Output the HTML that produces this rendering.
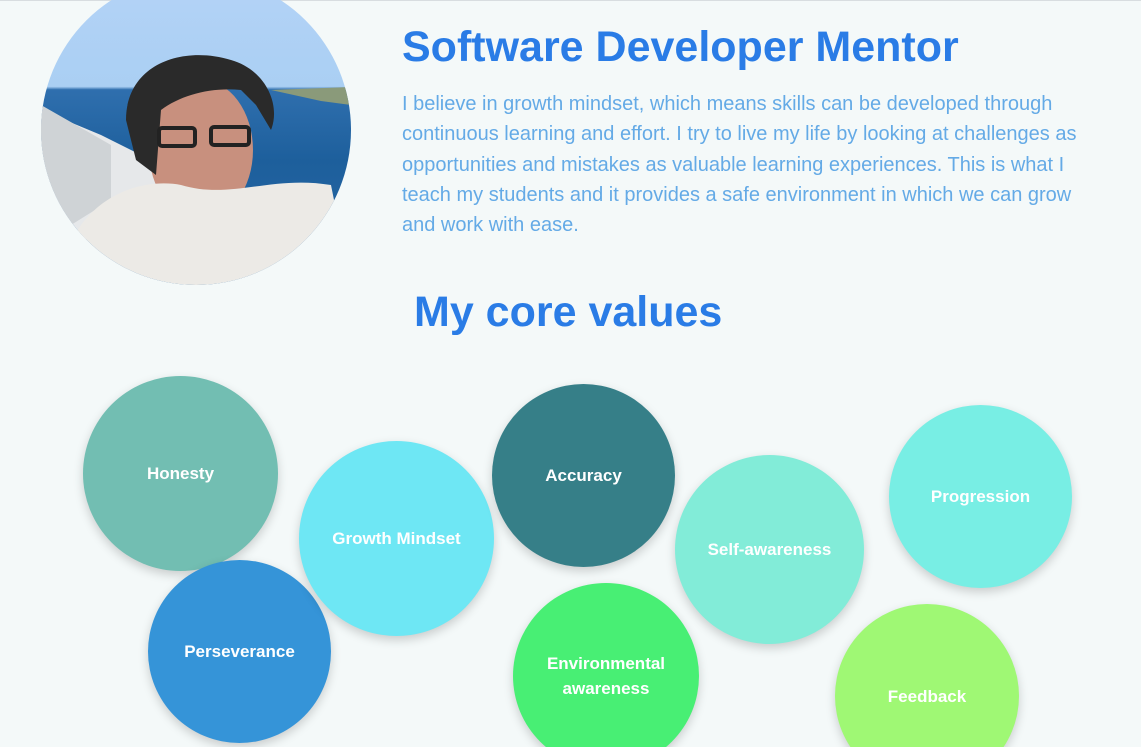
<!DOCTYPE html>
<html><head><meta charset="utf-8"><style>
html,body{margin:0;padding:0;width:1141px;height:747px;overflow:hidden;background:#f4f9f9;font-family:"Liberation Sans",Arial,sans-serif}
.wrap{position:relative;width:1141px;height:747px;overflow:hidden}
.top{position:absolute;left:0;top:0;width:1141px;height:1px;background:#d8dde0}
.photo{position:absolute;left:41px;top:-25px;width:310px;height:310px;border-radius:50%;overflow:hidden;background:linear-gradient(#b4d3f7 0%,#aacff3 36%,#2f6fae 37%,#1d5f9c 60%,#2a6aa6 100%)}
h1{position:absolute;left:402px;top:23px;margin:0;font-size:43px;color:#2a7ce6;font-weight:bold;white-space:nowrap}
p.intro{position:absolute;left:402px;top:89px;width:690px;margin:0;font-size:20px;line-height:30.3px;color:#64aae6}
h2{position:absolute;left:414px;top:288px;margin:0;font-size:43px;color:#2a7ce6;font-weight:bold}
.c{position:absolute;border-radius:50%;display:flex;align-items:center;justify-content:center;text-align:center;color:#fff;font-weight:bold;font-size:17px;line-height:25px;box-shadow:0 4px 10px rgba(0,0,0,.18)}
</style></head><body><div class="wrap">
<div class="top"></div>
<div class="photo">
<svg width="310" height="310" viewBox="0 0 310 310">
<path d="M230 115 L310 112 L310 130 L280 126 Z" fill="#8a9a7a"/>
<path d="M0 135 L60 160 L120 190 L110 270 L0 260 Z" fill="#e6e8ea"/>
<path d="M0 130 L0 230 L30 250 L70 225 L70 170 Z" fill="#cfd3d6"/>
<ellipse cx="160" cy="175" rx="52" ry="70" fill="#c8907e"/>
<path d="M85 145 C85 90 140 70 190 85 C225 95 240 130 230 155 L215 130 L200 115 C170 112 140 120 120 135 L115 200 L95 185 Z" fill="#2a2a2a"/>
<rect x="118" y="153" width="36" height="18" rx="3" fill="none" stroke="#222" stroke-width="4"/>
<rect x="170" y="152" width="38" height="18" rx="3" fill="none" stroke="#222" stroke-width="4"/>
<path d="M40 250 C70 210 115 205 140 210 C190 225 230 200 290 210 L310 310 L0 310 Z" fill="#eceae6"/>
</svg>
</div>
<h1>Software Developer Mentor</h1>
<p class="intro">I believe in growth mindset, which means skills can be developed through continuous learning and effort. I try to live my life by looking at challenges as opportunities and mistakes as valuable learning experiences. This is what I teach my students and it provides a safe environment in which we can grow and work with ease.</p>
<h2>My core values</h2>
<div class="c" style="left:83px;top:376px;width:195px;height:195px;background:#72beb2">Honesty</div>
<div class="c" style="left:148px;top:560px;width:183px;height:183px;background:#3594d8">Perseverance</div>
<div class="c" style="left:299px;top:441px;width:195px;height:195px;background:#6ee7f4">Growth Mindset</div>
<div class="c" style="left:492px;top:384px;width:183px;height:183px;background:#367f88">Accuracy</div>
<div class="c" style="left:513px;top:583px;width:186px;height:186px;background:#48ef74">Environmental<br>awareness</div>
<div class="c" style="left:675px;top:455px;width:189px;height:189px;background:#82ecd8">Self-awareness</div>
<div class="c" style="left:889px;top:405px;width:183px;height:183px;background:#78eee4">Progression</div>
<div class="c" style="left:835px;top:604px;width:184px;height:184px;background:#9ff874">Feedback</div>
</div></body></html>
